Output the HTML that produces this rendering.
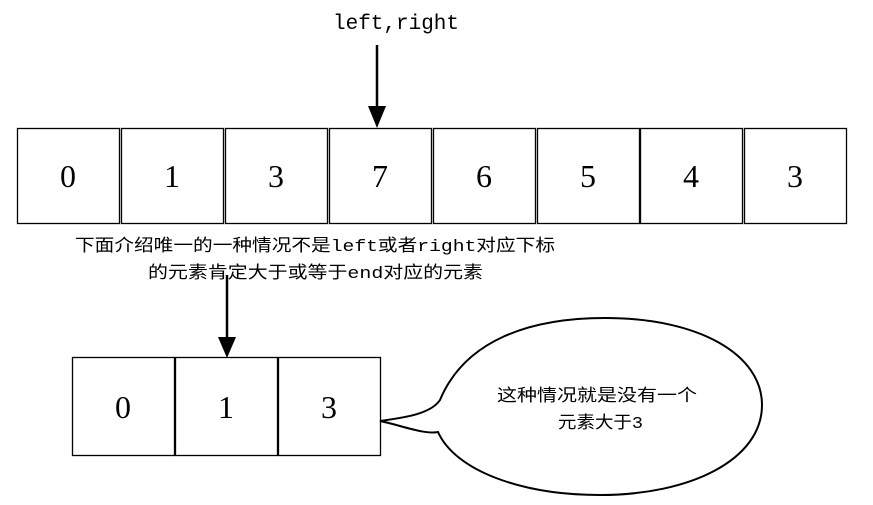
<!DOCTYPE html><html><head><meta charset="utf-8"><style>body{margin:0;background:#fff}</style></head><body>
<svg width="873" height="505" xmlns="http://www.w3.org/2000/svg" style="display:block">
<rect width="873" height="505" fill="#fff"/>
<g fill="none" stroke="#000" stroke-width="1.3">
<rect x="17.5" y="128.5" width="102" height="95"/>
<rect x="121.5" y="128.5" width="102" height="95"/>
<rect x="225.5" y="128.5" width="102" height="95"/>
<rect x="329.5" y="128.5" width="102" height="95"/>
<rect x="433.5" y="128.5" width="102" height="95"/>
<rect x="537.5" y="128.5" width="102" height="95"/>
<rect x="640.5" y="128.5" width="102" height="95"/>
<rect x="744.5" y="128.5" width="102" height="95"/>
<rect x="72.5" y="357.5" width="102" height="98"/>
<rect x="175.5" y="357.5" width="102" height="98"/>
<rect x="278.5" y="357.5" width="102" height="98"/>
</g>
<g stroke="#000" stroke-width="2.5"><line x1="377" y1="45" x2="377" y2="110"/><line x1="227" y1="275" x2="227" y2="340"/></g>
<polygon points="368,106 386,106 377,128" fill="#000"/>
<polygon points="218,337 236,337 227,358" fill="#000"/>
<path d="M380,421 C400,418 430,415 440,400 C465,340 530,318 605,318 C700,318 762,355 762,405 C762,460 690,495 600,495 C520,495 455,470 438,432 C425,435 400,425 380,421 Z" fill="#fff" stroke="#000" stroke-width="2"/>
<g font-family="Liberation Serif, serif" font-size="32" text-anchor="middle">
<text x="68" y="187">0</text><text x="172" y="187">1</text><text x="276" y="187">3</text><text x="380" y="187">7</text><text x="484" y="187">6</text><text x="588" y="187">5</text><text x="691" y="187">4</text><text x="795" y="187">3</text>
<text x="123" y="418">0</text><text x="226" y="418">1</text><text x="329" y="418">3</text>
</g>
<text x="396" y="29" font-family="Liberation Mono, monospace" font-size="21" text-anchor="middle">left,right</text>
<g font-family="Liberation Mono, 'Noto Sans CJK SC', monospace" font-size="17">
<text x="75" y="251" textLength="480" lengthAdjust="spacingAndGlyphs">下面介绍唯一的一种情况不是left或者right对应下标</text>
<text x="148" y="278" textLength="335" lengthAdjust="spacingAndGlyphs">的元素肯定大于或等于end对应的元素</text>
<text x="497" y="401" textLength="200" lengthAdjust="spacingAndGlyphs">这种情况就是没有一个</text>
<text x="558" y="428" textLength="85" lengthAdjust="spacingAndGlyphs">元素大于3</text>
</g>
</svg></body></html>
